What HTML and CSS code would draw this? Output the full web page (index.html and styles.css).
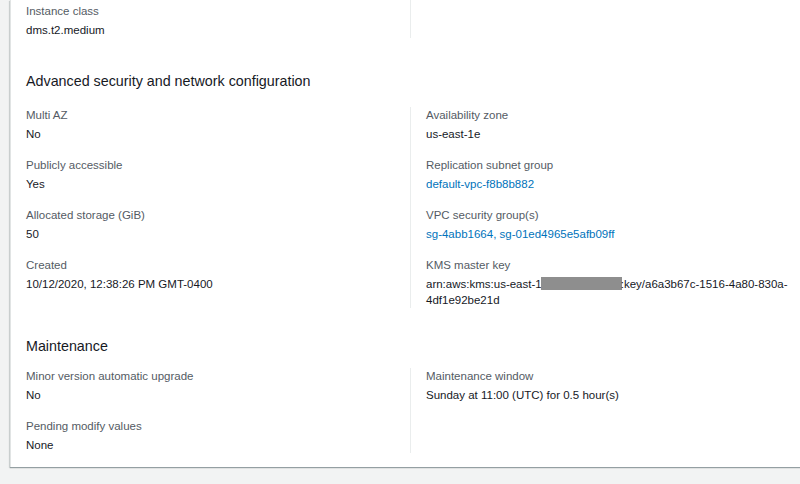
FILE: index.html
```html
<!DOCTYPE html>
<html lang="en">
<head>
<meta charset="utf-8">
<title>Replication instance details</title>
<link rel="stylesheet" href="styles.css">
</head>
<body>
<div class="card">
  <div class="cols cols-top">
    <div class="col">
      <div class="item">
        <div class="label">Instance class</div>
        <div class="value">dms.t2.medium</div>
      </div>
    </div>
    <div class="col"></div>
  </div>

  <h2 class="heading heading-adv">Advanced security and network configuration</h2>
  <div class="cols cols-adv">
    <div class="col">
      <div class="item">
        <div class="label">Multi AZ</div>
        <div class="value">No</div>
      </div>
      <div class="item">
        <div class="label">Publicly accessible</div>
        <div class="value">Yes</div>
      </div>
      <div class="item">
        <div class="label">Allocated storage (GiB)</div>
        <div class="value">50</div>
      </div>
      <div class="item">
        <div class="label">Created</div>
        <div class="value">10/12/2020, 12:38:26 PM GMT-0400</div>
      </div>
    </div>
    <div class="col">
      <div class="item">
        <div class="label">Availability zone</div>
        <div class="value">us-east-1e</div>
      </div>
      <div class="item">
        <div class="label">Replication subnet group</div>
        <div class="value"><a class="link" href="#">default-vpc-f8b8b882</a></div>
      </div>
      <div class="item">
        <div class="label">VPC security group(s)</div>
        <div class="value"><a class="link" href="#">sg-4abb1664</a><span class="link">, </span><a class="link" href="#">sg-01ed4965e5afb09ff</a></div>
      </div>
      <div class="item">
        <div class="label">KMS master key</div>
        <div class="value arn">arn:aws:kms:us-east-1<span class="redact"></span><span class="colon">:</span>key/a6a3b67c-1516-4a80-830a-<wbr>4df1e92be21d</div>
      </div>
    </div>
  </div>

  <h2 class="heading heading-maint">Maintenance</h2>
  <div class="cols cols-maint">
    <div class="col">
      <div class="item">
        <div class="label">Minor version automatic upgrade</div>
        <div class="value">No</div>
      </div>
      <div class="item">
        <div class="label">Pending modify values</div>
        <div class="value">None</div>
      </div>
    </div>
    <div class="col">
      <div class="item">
        <div class="label">Maintenance window</div>
        <div class="value">Sunday at 11:00 (UTC) for 0.5 hour(s)</div>
      </div>
    </div>
  </div>
</div>
</body>
</html>
```

FILE: styles.css
```css
html, body {
  margin: 0;
  padding: 0;
  background: #f2f3f3;
  overflow: hidden;
}
body {
  font-family: "Liberation Sans", Arial, sans-serif;
  color: #16191f;
  width: 800px;
  height: 484px;
}
.card {
  margin-left: 10px;
  width: 810px;
  background: #ffffff;
  border-left: 1px solid #e1e4e4;
  box-shadow: 0 1px 1px 0 rgba(0, 28, 36, 0.3), -1px 1px 1px 0 rgba(0, 28, 36, 0.12);
  padding: 0 0 14px 15px;
  box-sizing: border-box;
}
.cols {
  display: grid;
  grid-template-columns: 384px 384px;
}
.col {
  display: flex;
  flex-direction: column;
  gap: 15px;
}
.col + .col {
  border-left: 1px solid #eaeded;
  padding-left: 15px;
}
.cols-top .col {
  padding-top: 3px;
}
.item {
  display: flex;
  flex-direction: column;
  gap: 3px;
}
.label {
  font-size: 11.5px;
  line-height: 16px;
  color: #545b64;
}
.value {
  font-size: 11.5px;
  line-height: 16px;
  color: #16191f;
}
.link {
  color: #0073bb;
  text-decoration: none;
}
.arn {
  padding-right: 4px;
}
.redact {
  display: inline-block;
  width: 81px;
  height: 13px;
  margin-left: -1px;
  background: #8e8e8e;
  vertical-align: -2px;
}
.colon {
  margin-left: -1px;
}
.heading {
  margin: 0;
  font-size: 14.3px;
  line-height: 20px;
  font-weight: normal;
  color: #16191f;
}
.heading-adv {
  margin-top: 33px;
  margin-bottom: 16px;
}
.heading-maint {
  margin-top: 28px;
  margin-bottom: 12px;
}
```
